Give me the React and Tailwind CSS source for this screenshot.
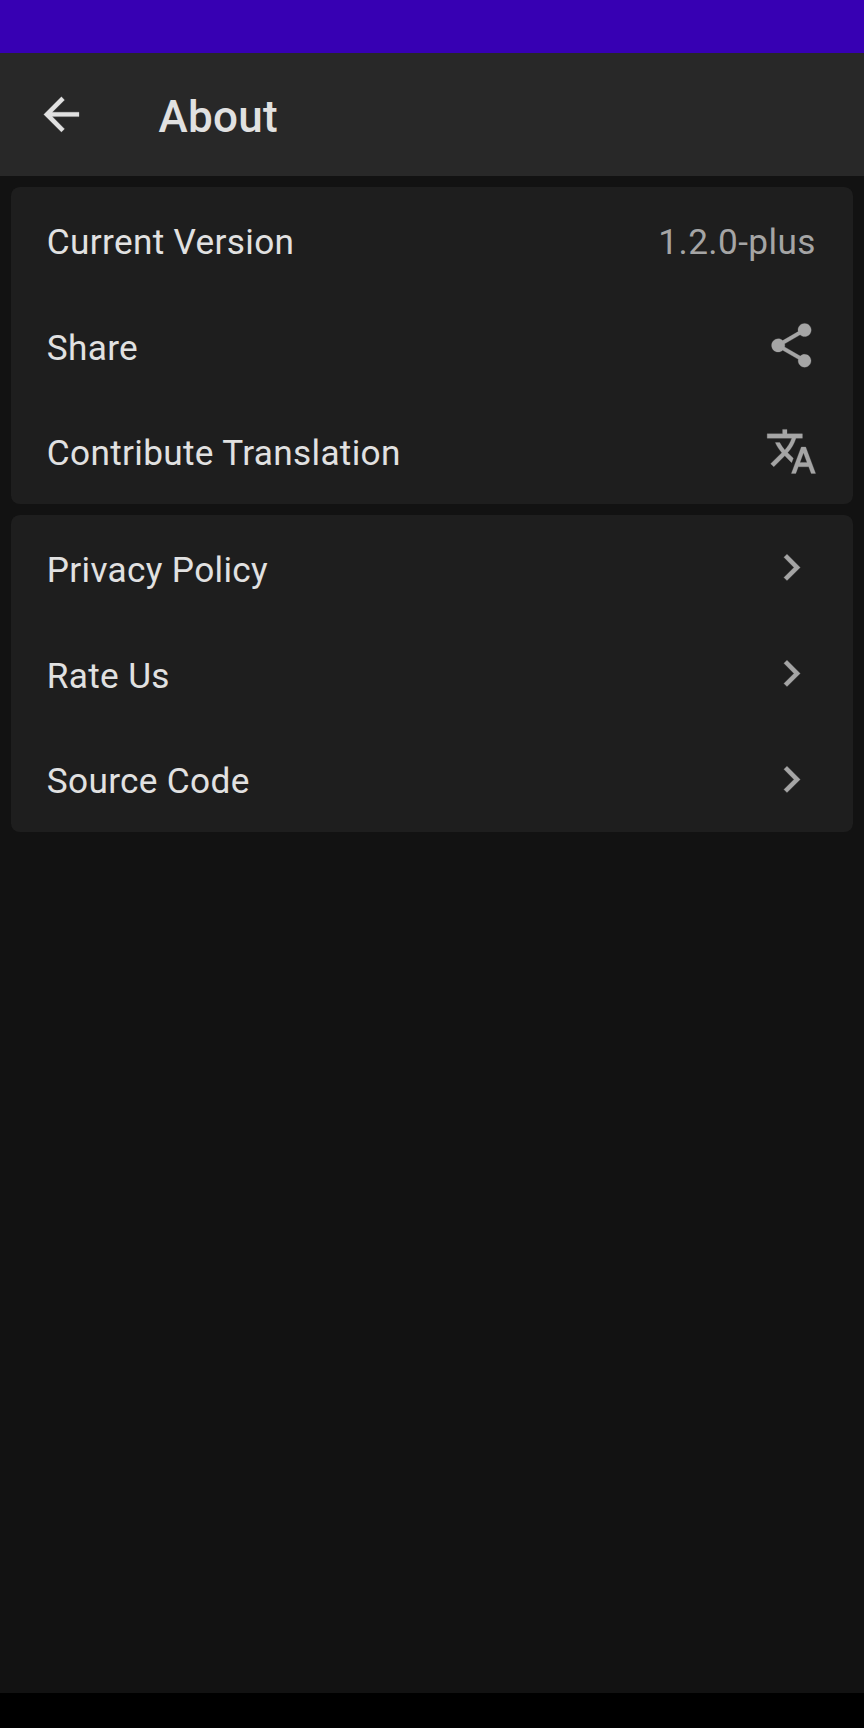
import React from "react";

const icons = {
  back: "M20 11H7.83l5.59-5.59L12 4l-8 8 8 8 1.41-1.41L7.83 13H20v-2z",
  share:
    "M18 16.08c-.76 0-1.44.3-1.96.77L8.91 12.7c.05-.23.09-.46.09-.7s-.04-.47-.09-.7l7.05-4.11c.54.5 1.25.81 2.04.81 1.66 0 3-1.34 3-3s-1.34-3-3-3-3 1.34-3 3c0 .24.04.47.09.7L8.04 9.81C7.5 9.31 6.79 9 6 9c-1.66 0-3 1.34-3 3s1.34 3 3 3c.79 0 1.5-.31 2.04-.81l7.12 4.16c-.05.21-.08.43-.08.65 0 1.61 1.31 2.92 2.92 2.92s2.92-1.31 2.92-2.92-1.31-2.92-2.92-2.92z",
  translate:
    "M12.87 15.07l-2.54-2.51.03-.03c1.74-1.94 2.98-4.17 3.71-6.53H17V4h-7V2H8v2H1v1.99h11.17C11.5 7.92 10.44 9.75 9 11.35 8.07 10.32 7.3 9.19 6.69 8h-2c.73 1.63 1.73 3.17 2.98 4.56l-5.09 5.02L4 19l5-5 3.11 3.11.76-2.04zM18.5 10h-2L12 22h2l1.12-3h4.75L21 22h2l-4.5-12zm-2.62 7l1.62-4.33L19.12 17h-3.24z",
  chevron: "M10 6L8.59 7.41 13.17 12l-4.58 4.59L10 18l6-6z",
};

function Icon({ name, className = "" }) {
  return (
    <svg
      viewBox="0 0 24 24"
      fill="currentColor"
      stroke="currentColor"
      strokeWidth="0.12"
      className={`size-[52.8px] shrink-0 ${className}`}
    >
      <path d={icons[name]} />
    </svg>
  );
}

function Row({ label, value, icon }) {
  return (
    <div className="flex h-[105.6px] items-center justify-between px-[35.2px] text-[#a5a5a5]">
      <span className="pt-[5px] pl-[0.6px] text-[#e1e1e1]">{label}</span>
      {value && <span className="pt-[5px] pr-[2px] tracking-[0.4px]">{value}</span>}
      {icon && <Icon name={icon} className="mt-[0.6px] mr-[0.4px]" />}
    </div>
  );
}

function Card({ children }) {
  return <section className="rounded-[8.8px] bg-[#1e1e1e]">{children}</section>;
}

export default function App() {
  return (
    <div className="flex h-[1728px] w-[864px] flex-col bg-[#121212] font-['Roboto',sans-serif] text-[35.2px] leading-[44px] tracking-[0.33px]">
      <div className="h-[53px] shrink-0 bg-[#3700b3]" />
      <header className="flex h-[123px] shrink-0 items-center bg-[#282828] pl-[35.2px] text-[#e1e1e1]">
        <Icon name="back" />
        <h1 className="pt-[5px] pl-[70.4px] text-[44px] leading-[52px] font-medium tracking-[0.33px]">About</h1>
      </header>
      <main className="flex grow flex-col gap-[11px] p-[11px]">
        <Card>
          <Row label="Current Version" value="1.2.0-plus" />
          <Row label="Share" icon="share" />
          <Row label="Contribute Translation" icon="translate" />
        </Card>
        <Card>
          <Row label="Privacy Policy" icon="chevron" />
          <Row label="Rate Us" icon="chevron" />
          <Row label="Source Code" icon="chevron" />
        </Card>
      </main>
      <div className="h-[35px] shrink-0 bg-black" />
    </div>
  );
}
